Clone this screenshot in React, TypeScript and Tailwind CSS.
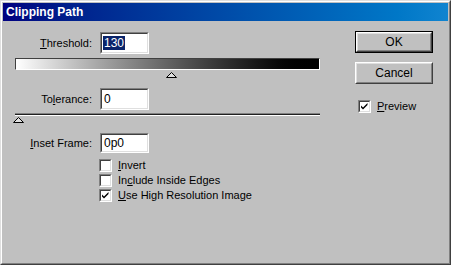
import React from 'react';

const FONT = { fontFamily: '"Liberation Sans", Arial, sans-serif' };

function Field({ value, selected, tall = true }: { value: string; selected?: boolean; tall?: boolean }) {
  return (
    <div className={`w-[49px] ${tall ? 'h-[22px]' : 'h-[20px]'} border border-t-[#808080] border-l-[#808080] border-b-white border-r-white`}>
      <div className="w-full h-full bg-white border border-t-[#404040] border-l-[#404040] border-b-[#dfdfdf] border-r-[#dfdfdf] flex items-center pl-[1px]">
        {selected ? (
          <span className="bg-[#0a246a] text-white leading-[14px] px-[1px] text-[12px]">{value}</span>
        ) : (
          <span className="leading-[14px] px-[1px] text-black text-[12px]">{value}</span>
        )}
      </div>
    </div>
  );
}

function Checkbox({ checked }: { checked?: boolean }) {
  return (
    <div className="w-[13px] h-[13px] shrink-0 border border-t-[#808080] border-l-[#808080] border-b-white border-r-white">
      <div className="w-full h-full bg-white border border-t-[#404040] border-l-[#404040] border-b-[#dfdfdf] border-r-[#dfdfdf]">
        {checked && (
          <svg width="9" height="9" viewBox="0 0 9 9" className="block">
            <path d="M1 3.5 L3 5.5 L7.5 1 L7.5 3 L3 7.5 L1 5.5 Z" fill="#000" />
          </svg>
        )}
      </div>
    </div>
  );
}

function Thumb({ value }: { value: number }) {
  const left = -2 + Math.round((value / 255) * 300);
  return (
    <div className="h-[6px]">
      <svg width="11" height="6" viewBox="0 0 11 6" className="block" style={{ marginLeft: left }}>
        <path d="M5.5 0.5 L10.5 5.5 L0.5 5.5 Z" fill="#e0e0e0" stroke="#000" strokeWidth="1" />
      </svg>
    </div>
  );
}

function Button({ label, isDefault }: { label: string; isDefault?: boolean }) {
  return (
    <div className={`w-[78px] h-[22px] ${isDefault ? 'border border-black' : ''}`}>
      <div className="w-full h-full border border-t-white border-l-white border-b-[#404040] border-r-[#404040]">
        <div className="w-full h-full border border-t-[#dfdfdf] border-l-[#dfdfdf] border-b-[#808080] border-r-[#808080] flex items-center justify-center text-black text-[12px]">
          {label}
        </div>
      </div>
    </div>
  );
}

export default function App() {
  return (
    <div style={FONT} className="w-[451px] h-[265px] text-[11px] text-black">
      <div className="w-full h-full border border-t-[#dfdfdf] border-l-[#dfdfdf] border-b-[#404040] border-r-[#404040]">
        <div className="w-full h-full bg-[#c0c0c0] border border-t-white border-l-white border-b-[#808080] border-r-[#808080] p-[1px] flex flex-col">
          {/* Title bar */}
          <div className="h-[18px] bg-gradient-to-r from-[#000080] to-[#1084d0] flex items-center pl-[3px]">
            <span className="text-white font-bold text-[12px] leading-none">Clipping Path</span>
          </div>

          <div className="flex flex-row">
            {/* Left column */}
            <div className="w-[352px] pl-[12px] pt-[11px]">
              <div className="flex items-center">
                <div className="w-[77px] text-right"><u>T</u>hreshold:</div>
                <div className="ml-[8px]"><Field value="130" selected /></div>
              </div>
              <div className="mt-[4px] w-[305px] h-[12px] border border-t-[#404040] border-l-[#404040] border-b-white border-r-white bg-gradient-to-r from-white to-black" />
              <div className="mt-[2px]"><Thumb value={130} /></div>

              <div className="flex items-center mt-[10px]">
                <div className="w-[77px] text-right">To<u>l</u>erance:</div>
                <div className="ml-[8px]"><Field value="0" /></div>
              </div>
              <div className="mt-[3px] w-[305px] h-[3px] border-t border-t-[#808080] border-b border-b-white bg-[#202020]" />
              <div className="mt-[1px]"><Thumb value={0} /></div>

              <div className="flex items-center mt-[10px]">
                <div className="w-[77px] text-right"><u>I</u>nset Frame:</div>
                <div className="ml-[8px]"><Field value="0p0" tall={false} /></div>
              </div>

              <div className="ml-[84px] mt-[6px] flex flex-col gap-[2px]">
                <div className="flex items-center gap-[6px] h-[13px]">
                  <Checkbox />
                  <span><u>I</u>nvert</span>
                </div>
                <div className="flex items-center gap-[6px] h-[13px]">
                  <Checkbox />
                  <span>In<u>c</u>lude Inside Edges</span>
                </div>
                <div className="flex items-center gap-[6px] h-[13px]">
                  <Checkbox checked />
                  <span><u>U</u>se High Resolution Image</span>
                </div>
              </div>
            </div>

            {/* Right column */}
            <div className="pt-[10px] flex flex-col">
              <Button label="OK" isDefault />
              <div className="mt-[9px]"><Button label="Cancel" /></div>
              <div className="mt-[14px] ml-[3px] flex items-center gap-[6px]">
                <Checkbox checked />
                <span><u>P</u>review</span>
              </div>
            </div>
          </div>
        </div>
      </div>
    </div>
  );
}
